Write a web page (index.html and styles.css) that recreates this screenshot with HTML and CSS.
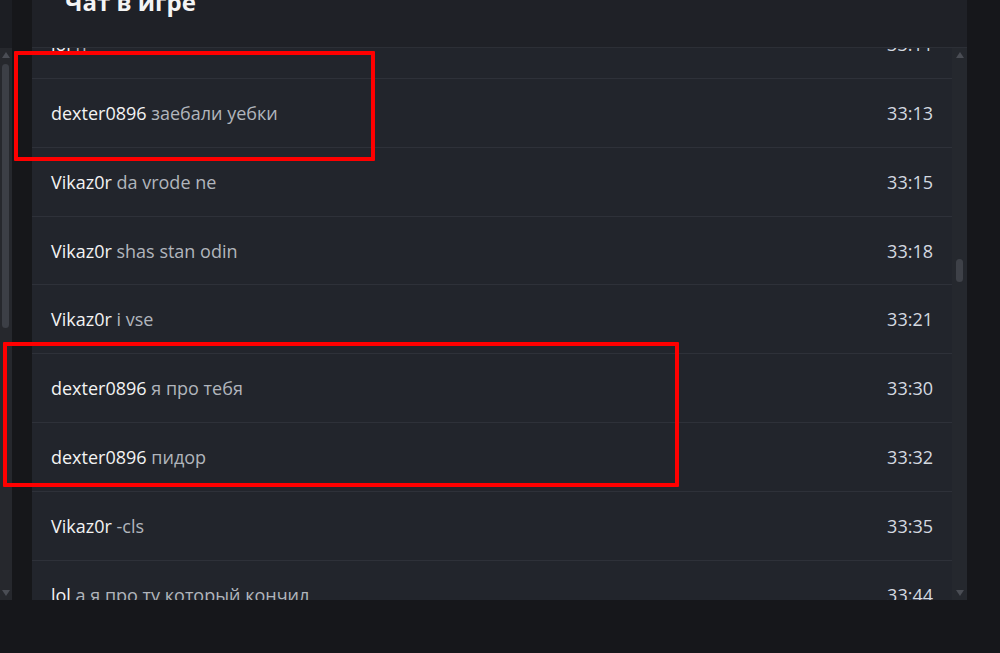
FILE: index.html
```html
<!DOCTYPE html>
<html lang="ru">
<head>
<meta charset="utf-8">
<title>Чат в игре</title>
<link rel="stylesheet" href="styles.css">
</head>
<body>
<div class="screen">
  <div class="side">
    <div class="side-top"></div>
    <div class="side-scroll">
      <span class="arrow arrow-up"></span>
      <div class="side-track"><div class="side-thumb"></div></div>
      <span class="arrow arrow-down"></span>
    </div>
  </div>
  <div class="gutter"></div>
  <div class="panel">
    <header class="panel-head"><h2 class="panel-title">Чат в игре</h2></header>
    <div class="panel-body">
      <div class="viewport">
        <ul class="list">
          <li class="row"><span class="msg"><b class="name">lol</b> п</span><span class="time">33:11</span></li>
          <li class="row"><span class="msg"><b class="name">dexter0896</b> заебали уебки</span><span class="time">33:13</span></li>
          <li class="row"><span class="msg"><b class="name">Vikaz0r</b> da vrode ne</span><span class="time">33:15</span></li>
          <li class="row"><span class="msg"><b class="name">Vikaz0r</b> shas stan odin</span><span class="time">33:18</span></li>
          <li class="row"><span class="msg"><b class="name">Vikaz0r</b> i vse</span><span class="time">33:21</span></li>
          <li class="row"><span class="msg"><b class="name">dexter0896</b> я про тебя</span><span class="time">33:30</span></li>
          <li class="row"><span class="msg"><b class="name">dexter0896</b> пидор</span><span class="time">33:32</span></li>
          <li class="row"><span class="msg"><b class="name">Vikaz0r</b> -cls</span><span class="time">33:35</span></li>
          <li class="row"><span class="msg"><b class="name">lol</b> а я про ту который кончил</span><span class="time">33:44</span></li>
        </ul>
      </div>
      <div class="vscroll">
        <span class="arrow arrow-up"></span>
        <div class="vtrack"><div class="vthumb"></div></div>
        <span class="arrow arrow-down"></span>
      </div>
    </div>
  </div>
</div>
<div class="mark mark-one"></div>
<div class="mark mark-two"></div>
</body>
</html>
```
FILE: styles.css
```css
* { box-sizing: border-box; }
html, body { margin: 0; padding: 0; }
body {
  background: #16171b;
  width: 1000px;
  height: 653px;
  overflow: hidden;
  font-family: "Open Sans", "Noto Sans", sans-serif;
  position: relative;
}
.screen {
  display: flex;
  height: 600px;
}
.side {
  width: 12px;
  display: flex;
  flex-direction: column;
}
.side-top {
  height: 48px;
  background: #1c1e23;
}
.side-scroll {
  flex: 1;
  background: #26282d;
  display: flex;
  flex-direction: column;
  align-items: center;
  padding: 4px 0 4px;
}
.side-track {
  flex: 1;
  width: 100%;
  padding: 6px 3px 262px 2px;
  display: flex;
}
.side-thumb {
  flex: 1;
  background: #3c3f46;
  border-radius: 4px;
}
.gutter {
  width: 20px;
  background: #16171a;
}
.panel {
  width: 935px;
  display: flex;
  flex-direction: column;
  background: #22252c;
}
.panel-head {
  height: 48px;
  background: #1f2127;
  border-bottom: 1px solid #2c2f36;
  overflow: hidden;
  padding-left: 33px;
}
.panel-title {
  margin: -14px 0 0;
  font-size: 24px;
  line-height: 32px;
  font-weight: 700;
  color: #f4f4f4;
}
.panel-body {
  flex: 1;
  display: flex;
  min-height: 0;
}
.viewport {
  flex: 1;
  overflow: hidden;
}
.list {
  list-style: none;
  margin: -38px 0 0;
  padding: 0;
}
.row {
  height: 68.86px;
  border-bottom: 1px solid #2e3139;
  display: flex;
  align-items: center;
  justify-content: space-between;
  padding: 0 19px;
  font-size: 18px;
}
.msg { color: #b1b5bc; }
.name { font-weight: 400; color: #f3f3f3; }
.time { color: #d4d9e0; }
.vscroll {
  width: 15px;
  background: #25282e;
  display: flex;
  flex-direction: column;
  align-items: center;
  padding: 4px 0 4px;
}
.vtrack {
  flex: 1;
  width: 100%;
  padding: 201px 4px 0 4px;
  display: flex;
  flex-direction: column;
}
.vthumb {
  height: 23px;
  background: #3e4148;
  border-radius: 4px;
}
.arrow {
  width: 0;
  height: 0;
  border-left: 4px solid transparent;
  border-right: 4px solid transparent;
}
.arrow-up { border-bottom: 6px solid #4a4d54; }
.arrow-down { border-top: 6px solid #4a4d54; }
.mark {
  position: absolute;
  border: 4px solid #ff0000;
  border-radius: 1px;
}
.mark-one { left: 14px; top: 51px; width: 361px; height: 110px; }
.mark-two { left: 3px; top: 342px; width: 676px; height: 145px; }
```
